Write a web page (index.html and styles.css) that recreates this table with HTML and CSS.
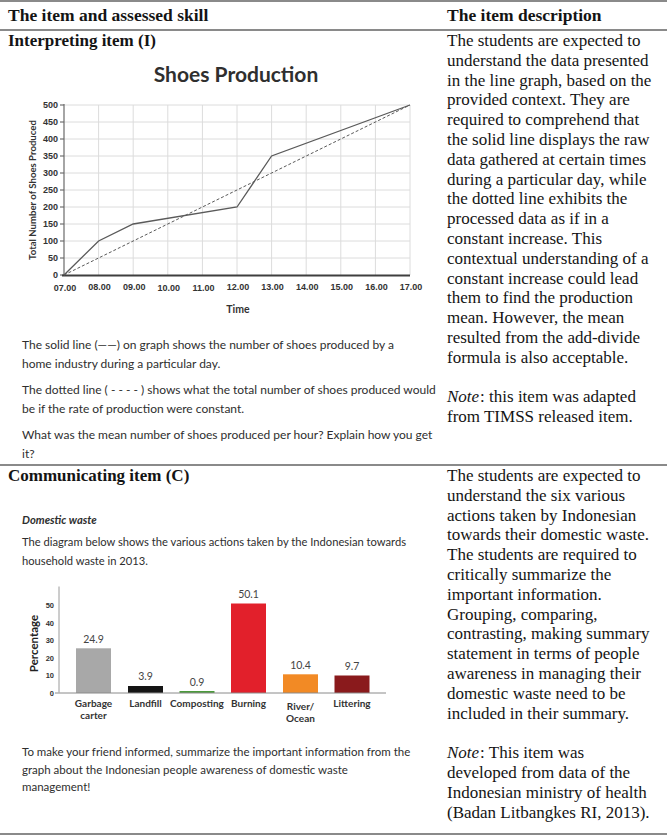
FILE: index.html
```html
<!DOCTYPE html>
<html lang="en">
<head>
<meta charset="utf-8">
<title>Items and assessed skills</title>
<link rel="stylesheet" href="styles.css">
</head>
<body>
<div class="table">
  <div class="row head">
    <div class="cell left">The item and assessed skill</div>
    <div class="cell right">The item description</div>
  </div>

  <div class="row">
    <div class="cell left">
      <div class="item-title">Interpreting item (I)</div>
      <svg class="chart chart1" width="439" height="284" viewBox="8 51 439 284">
        <text class="c1-title" x="236" y="82" text-anchor="middle">Shoes Production</text>
        <g class="grid">
          <line x1="98.6" y1="105" x2="98.6" y2="275"/>
          <line x1="133.2" y1="105" x2="133.2" y2="275"/>
          <line x1="167.8" y1="105" x2="167.8" y2="275"/>
          <line x1="202.4" y1="105" x2="202.4" y2="275"/>
          <line x1="237" y1="105" x2="237" y2="275"/>
          <line x1="271.6" y1="105" x2="271.6" y2="275"/>
          <line x1="306.2" y1="105" x2="306.2" y2="275"/>
          <line x1="340.8" y1="105" x2="340.8" y2="275"/>
          <line x1="375.4" y1="105" x2="375.4" y2="275"/>
          <line x1="410" y1="105" x2="410" y2="275"/>
          <line x1="64" y1="258" x2="410" y2="258"/>
          <line x1="64" y1="241" x2="410" y2="241"/>
          <line x1="64" y1="224" x2="410" y2="224"/>
          <line x1="64" y1="207" x2="410" y2="207"/>
          <line x1="64" y1="190" x2="410" y2="190"/>
          <line x1="64" y1="173" x2="410" y2="173"/>
          <line x1="64" y1="156" x2="410" y2="156"/>
          <line x1="64" y1="139" x2="410" y2="139"/>
          <line x1="64" y1="122" x2="410" y2="122"/>
          <line x1="64" y1="105" x2="410" y2="105"/>
        </g>
        <g class="ticks">
          <line x1="60" y1="275" x2="64" y2="275"/>
          <line x1="60" y1="258" x2="64" y2="258"/>
          <line x1="60" y1="241" x2="64" y2="241"/>
          <line x1="60" y1="224" x2="64" y2="224"/>
          <line x1="60" y1="207" x2="64" y2="207"/>
          <line x1="60" y1="190" x2="64" y2="190"/>
          <line x1="60" y1="173" x2="64" y2="173"/>
          <line x1="60" y1="156" x2="64" y2="156"/>
          <line x1="60" y1="139" x2="64" y2="139"/>
          <line x1="60" y1="122" x2="64" y2="122"/>
          <line x1="60" y1="105" x2="64" y2="105"/>
        </g>
        <line class="y-axis" x1="64" y1="104" x2="64" y2="276"/>
        <line class="x-axis" x1="62" y1="275.5" x2="410" y2="275.5"/>
        <g class="ylab">
          <text x="58" y="278">0</text>
          <text x="58" y="261">50</text>
          <text x="58" y="244">100</text>
          <text x="58" y="227">150</text>
          <text x="58" y="210">200</text>
          <text x="58" y="193">250</text>
          <text x="58" y="176">300</text>
          <text x="58" y="159">350</text>
          <text x="58" y="142">400</text>
          <text x="58" y="125">450</text>
          <text x="58" y="108">500</text>
        </g>
        <g class="xlab">
          <text x="65" y="291">07.00</text>
          <text x="99.6" y="290">08.00</text>
          <text x="134.2" y="290">09.00</text>
          <text x="168.8" y="291">10.00</text>
          <text x="203.4" y="291">11.00</text>
          <text x="238" y="290">12.00</text>
          <text x="272.6" y="290">13.00</text>
          <text x="307.2" y="290">14.00</text>
          <text x="341.8" y="290">15.00</text>
          <text x="376.4" y="290">16.00</text>
          <text x="411" y="290">17.00</text>
        </g>
        <text class="axis-title" transform="translate(36 190) rotate(-90)" text-anchor="middle">Total Number of Shoes Produced</text>
        <text class="time" x="238" y="313" text-anchor="middle">Time</text>
        <polyline class="dashed" points="64,275 410,105"/>
        <polyline class="solid" points="64,275 98.6,241 133.2,224 237,207 271.6,156 410,105"/>
      </svg>
      <div class="question q1">
        <p>The solid line (——) on graph shows the number of shoes produced by a<br>home industry during a particular day.</p>
        <p>The dotted line ( - - - - ) shows what the total number of shoes produced would<br>be if the rate of production were constant.</p>
        <p>What was the mean number of shoes produced per hour? Explain how you get<br>it?</p>
      </div>
    </div>
    <div class="cell right desc">
      <p>The students are expected to understand the data presented in the line graph, based on the provided context. They are required to comprehend that the solid line displays the raw data gathered at certain times during a particular day, while the dotted line exhibits the processed data as if in a constant increase. This contextual understanding of a constant increase could lead them to find the production mean. However, the mean resulted from the add-divide formula is also acceptable.</p>
      <p><i>Note</i>: this item was adapted from TIMSS released item.</p>
    </div>
  </div>

  <div class="row last">
    <div class="cell left">
      <div class="item-title">Communicating item (C)</div>
      <div class="question q2">
        <p class="subhead">Domestic waste</p>
        <p class="intro">The diagram below shows the various actions taken by the Indonesian towards household waste in 2013.</p>
      </div>
      <svg class="chart chart2" width="439" height="171.5" viewBox="8 569.5 439 171.5">
        <line class="y-axis2" x1="59" y1="586" x2="59" y2="692"/>
        <g class="ylab2">
          <text x="54" y="695">0</text>
          <text x="54" y="677.5">10</text>
          <text x="54" y="660">20</text>
          <text x="54" y="642.5">30</text>
          <text x="54" y="625">40</text>
          <text x="54" y="607.5">50</text>
        </g>
        <text class="axis-title2" transform="translate(38 643) rotate(-90)" text-anchor="middle">Percentage</text>
        <rect x="76" y="647.8" width="35" height="44.7" fill="#a8a8a8"/>
        <rect x="128" y="685.5" width="35" height="7" fill="#151515"/>
        <rect x="179.5" y="690.5" width="35" height="2" fill="#4b9b3b"/>
        <rect x="231" y="603" width="35" height="89.5" fill="#e2202b"/>
        <rect x="283" y="673.8" width="35" height="18.7" fill="#f28a25"/>
        <rect x="334.5" y="675" width="35" height="17.5" fill="#8a1a1c"/>
        <line class="x-axis2" x1="55" y1="692.5" x2="386" y2="692.5"/>
        <g class="val">
          <text x="93.5" y="642">24.9</text>
          <text x="145.5" y="679">3.9</text>
          <text x="197" y="685">0.9</text>
          <text x="248.5" y="597">50.1</text>
          <text x="300.5" y="668">10.4</text>
          <text x="352" y="669">9.7</text>
        </g>
        <g class="cat">
          <text x="93.5" y="706">Garbage</text>
          <text x="93.5" y="718">carter</text>
          <text x="145.5" y="706">Landfill</text>
          <text x="197" y="706">Composting</text>
          <text x="248.5" y="706">Burning</text>
          <text x="300.5" y="709">River/</text>
          <text x="300.5" y="721">Ocean</text>
          <text x="352" y="706">Littering</text>
        </g>
      </svg>
      <div class="question q3">
        <p>To make your friend informed, summarize the important information from the graph about the Indonesian people awareness of domestic waste management!</p>
      </div>
    </div>
    <div class="cell right desc">
      <p>The students are expected to understand the six various actions taken by Indonesian towards their domestic waste. The students are required to critically summarize the important information. Grouping, comparing, contrasting, making summary statement in terms of people awareness in managing their domestic waste need to be included in their summary.</p>
      <p><i>Note</i>: This item was developed from data of the Indonesian ministry of health (Badan Litbangkes RI, 2013).</p>
    </div>
  </div>
</div>
</body>
</html>
```

FILE: styles.css
```css
html, body {
  margin: 0;
  padding: 0;
  background: #ffffff;
}

body {
  width: 667px;
  height: 839px;
  overflow: hidden;
  font-family: "Liberation Serif", "Times New Roman", serif;
  color: #141414;
}

.table {
  width: 667px;
  border-top: 2px solid #8a8a8a;
}

.row {
  display: grid;
  grid-template-columns: 447px 1fr;
  border-bottom: 2px solid #8a8a8a;
  padding-bottom: 1px;
}

.row.head {
  padding-bottom: 0;
  font-weight: bold;
  font-size: 17.5px;
  line-height: 27px;
}

.row.last {
  padding-bottom: 11px;
}

.cell.left {
  padding-left: 8px;
}

.item-title {
  font-weight: bold;
  font-size: 17px;
  line-height: 20px;
}

.desc {
  font-size: 17px;
  line-height: 19.8px;
  width: 209px;
}

.desc p {
  margin: 0 0 19.8px 0;
}

.desc p:last-child {
  margin-bottom: 0;
}

.desc i {
  padding-right: 1px;
}

.chart {
  display: block;
}

.question {
  font-family: Lato, "Open Sans", sans-serif;
  font-size: 12px;
  color: #2e2e2e;
  padding-left: 14px;
}

.question p {
  margin: 0 0 7px 0;
  line-height: 19px;
  width: 405px;
}

.q1 p {
  width: 425px;
}

.question p:last-child {
  margin-bottom: 0;
}

.q2 .subhead {
  margin-top: 23.5px;
  margin-bottom: 3px;
  font-size: 11.2px;
  font-weight: bold;
  font-style: italic;
}

.q2 .intro {
  font-size: 11.2px;
}

.q3 {
  margin-top: 2px;
  font-size: 11.5px;
}

.q3 p {
  line-height: 17.5px;
  width: 395px;
}

/* chart 1 */
.c1-title {
  font-family: Lato, "Open Sans", sans-serif;
  font-weight: bold;
  font-size: 21px;
  fill: #2f2f2f;
}

.grid line {
  stroke: #dcdcdc;
  stroke-width: 1;
}

.ticks line {
  stroke: #555;
  stroke-width: 1;
}

.y-axis {
  stroke: #6a6a6a;
  stroke-width: 1.2;
}

.x-axis {
  stroke: #3f3f3f;
  stroke-width: 1.8;
}

.ylab text {
  font-family: "Liberation Sans", Arial, sans-serif;
  font-weight: bold;
  font-size: 9px;
  fill: #333;
  text-anchor: end;
}

.xlab text {
  font-family: "Liberation Sans", Arial, sans-serif;
  font-weight: bold;
  font-size: 9px;
  fill: #333;
  text-anchor: middle;
}

.axis-title {
  font-family: Lato, "Open Sans", sans-serif;
  font-weight: bold;
  font-size: 9.6px;
  fill: #333;
}

.time {
  font-family: Lato, "Open Sans", sans-serif;
  font-weight: bold;
  font-size: 10.5px;
  fill: #333;
}

.solid {
  fill: none;
  stroke: #5a5a5a;
  stroke-width: 1.3;
}

.dashed {
  fill: none;
  stroke: #5a5a5a;
  stroke-width: 1;
  stroke-dasharray: 3 2;
}

/* chart 2 */
.y-axis2 {
  stroke: #9a9a9a;
  stroke-width: 1;
}

.x-axis2 {
  stroke: #8a8a8a;
  stroke-width: 1;
}

.ylab2 text {
  font-family: "Liberation Sans", Arial, sans-serif;
  font-weight: bold;
  font-size: 7.5px;
  fill: #333;
  text-anchor: end;
}

.axis-title2 {
  font-family: Lato, "Open Sans", sans-serif;
  font-weight: bold;
  font-size: 11.5px;
  fill: #222;
}

.val text {
  font-family: Lato, "Open Sans", sans-serif;
  font-size: 10.5px;
  fill: #444;
  text-anchor: middle;
}

.cat text {
  font-family: Lato, "Open Sans", sans-serif;
  font-weight: bold;
  font-size: 10px;
  fill: #333;
  text-anchor: middle;
}
```
